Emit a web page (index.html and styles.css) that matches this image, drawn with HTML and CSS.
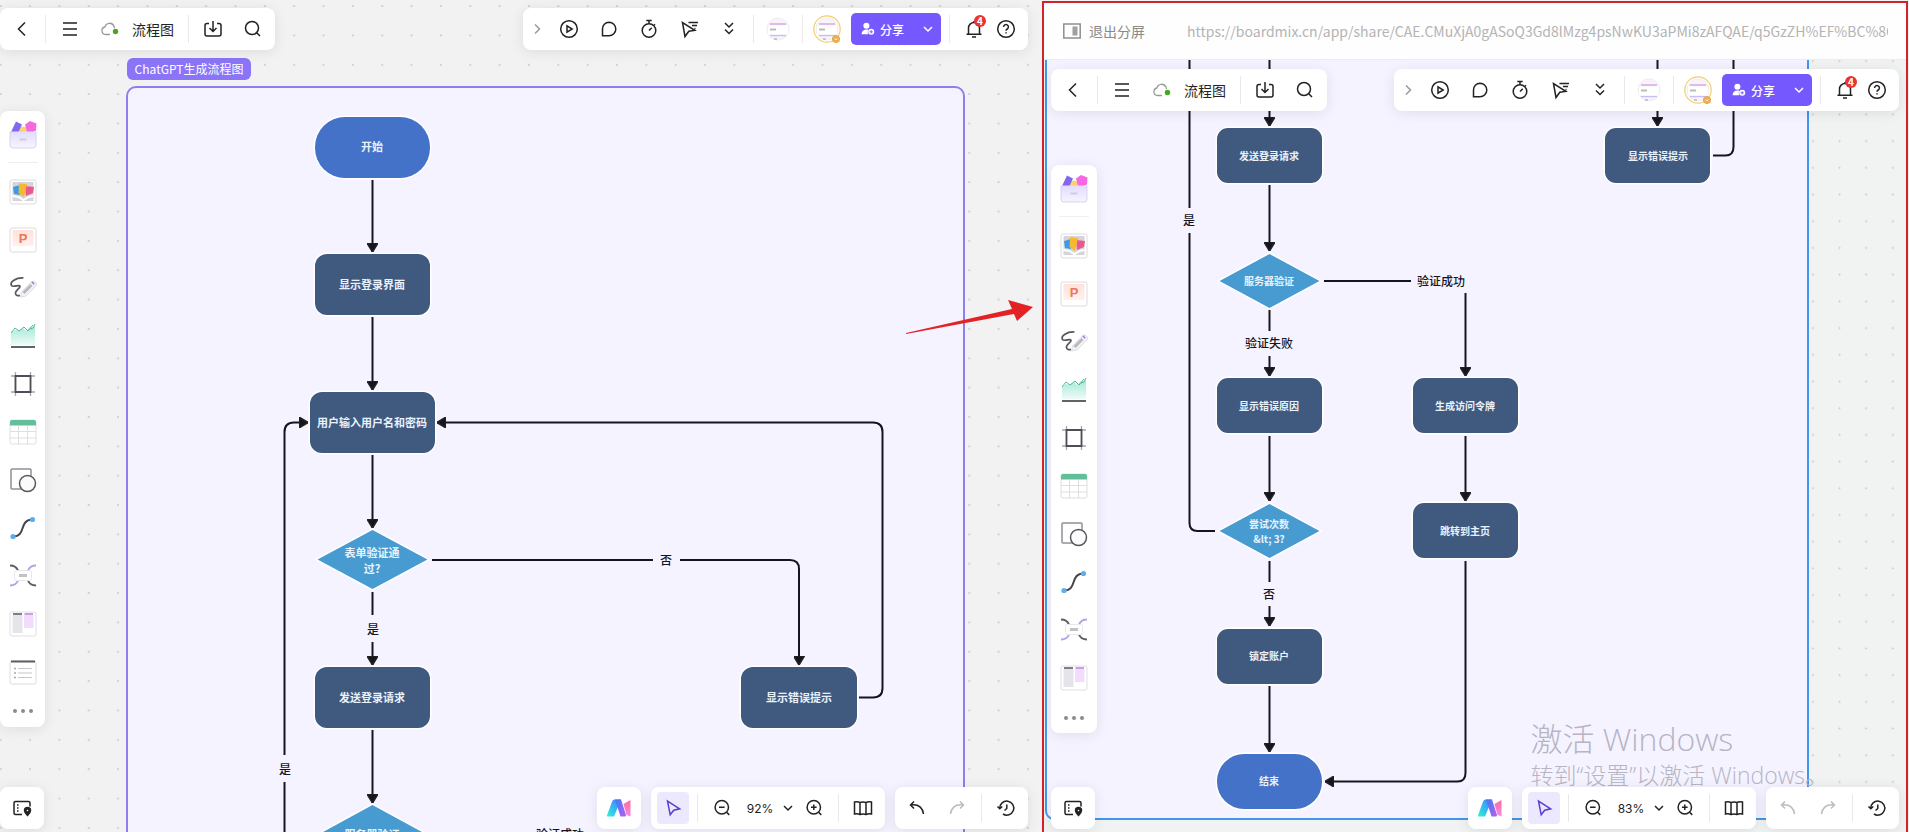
FILE: index.html
```html
<!DOCTYPE html>
<html lang="zh-CN">
<head>
    <meta charset="UTF-8">
    <meta name="viewport" content="width=device-width, initial-scale=1.0">
    <title>流程图</title>
    <link rel="stylesheet" href="styles.css">
</head>
<body>
    <!-- icon sprite -->
    <svg class="sprite" width="0" height="0" aria-hidden="true">
        <defs>
            <linearGradient id="aiLeft" x1="0" y1="1" x2="1" y2="0">
                <stop offset="0" stop-color="#2ff5d0"/><stop offset=".5" stop-color="#35b5f5"/><stop offset="1" stop-color="#3f7cf0"/>
            </linearGradient>
            <linearGradient id="aiMid" x1="0" y1="0" x2="1" y2="1">
                <stop offset="0" stop-color="#3a7df0"/><stop offset="1" stop-color="#b85cf8"/>
            </linearGradient>
            <linearGradient id="aiRight" x1="0" y1="0" x2="0" y2="1">
                <stop offset="0" stop-color="#ff6a9e"/><stop offset="1" stop-color="#f58ae0"/>
            </linearGradient>
            <linearGradient id="boxFill" x1="0" y1="0" x2="0" y2="1">
                <stop offset="0" stop-color="#e2dcfd"/><stop offset="1" stop-color="#f7f5ff"/>
            </linearGradient>
            <linearGradient id="chartFill" x1="0" y1="0" x2="0" y2="1">
                <stop offset="0" stop-color="#9fe8d5"/><stop offset="1" stop-color="#effbf8"/>
            </linearGradient>
            <linearGradient id="pptFill" x1="0" y1="0" x2="0" y2="1">
                <stop offset="0" stop-color="#ffe2da"/><stop offset="1" stop-color="#fff1ed"/>
            </linearGradient>
            <marker id="arrow" viewBox="0 0 9 11" refX="9" refY="5.5" markerWidth="9" markerHeight="11" markerUnits="userSpaceOnUse" orient="auto">
                <path d="M0 0 9 5.5 0 11z" fill="#15151f"/>
            </marker>
        </defs>
        <symbol id="i-back" viewBox="0 0 20 20"><path d="M12 3.500 5.500 10l6.500 6.500"/></symbol>
        <symbol id="i-menu" viewBox="0 0 20 20"><path d="M3 4h14M3 10h14M3 16h14"/></symbol>
        <symbol id="i-cloud" viewBox="0 0 20 20">
            <path d="M10 15.500H5.500a3.800 3.800 0 0 1-.6-7.500A4.800 4.800 0 0 1 14 7.200q.4 1 .4 2" stroke="#9a9a9a" stroke-width="1.300"/>
            <circle cx="15.500" cy="12.500" r="2.700" fill="#45a81f" stroke="none"/>
        </symbol>
        <symbol id="i-download" viewBox="0 0 20 20"><path d="M6 4.500H4a2 2 0 0 0-2 2V15a2 2 0 0 0 2 2h12a2 2 0 0 0 2-2V6.500a2 2 0 0 0-2-2h-2M10 2v10M6.500 9l3.500 3.500L13.500 9"/></symbol>
        <symbol id="i-search" viewBox="0 0 20 20"><circle cx="9" cy="9" r="6.500"/><path d="m13.700 13.700 3.300 3.300"/></symbol>
        <symbol id="i-next" viewBox="0 0 20 20"><path d="m9 5.500 4.500 4.500L9 14.500" stroke="#9a9a9a"/></symbol>
        <symbol id="i-play" viewBox="0 0 20 20"><circle cx="10" cy="10" r="8.300"/><path d="M8 6.800v6.400l5.200-3.200z"/></symbol>
        <symbol id="i-comment" viewBox="0 0 20 20"><path d="M10 3.200a6.800 6.800 0 1 1 0 13.600H3.500V10A6.600 6.600 0 0 1 10 3.200z"/></symbol>
        <symbol id="i-timer" viewBox="0 0 20 20"><circle cx="10" cy="11.500" r="6.800"/><path d="M10 4.500v-3M7.300 1.500h5.400M10 11.500l2.800-2.800M15 6.300l1-1"/></symbol>
        <symbol id="i-pointer" viewBox="0 0 20 20"><path d="m3.500 3.500 2.500 14 3.800-5.300 6-.8zM9.500 3.500h9.500M13 6.500h5M15.500 9.500h1"/></symbol>
        <symbol id="i-more" viewBox="0 0 20 20"><path d="m6 4 4 4 4-4M6 10.500l4 4 4-4"/></symbol>
        <symbol id="i-user" viewBox="0 0 20 20">
            <g fill="#fff" stroke="none"><circle cx="8" cy="6" r="3.800"/><path d="M2 16.500c0-4 2.500-6 6-6 1 0 2 .2 2.700.6a4.500 4.500 0 0 0-.4 5.400z"/><circle cx="14" cy="13.500" r="3.800"/></g>
            <path d="M14 11.500v4M12 13.500h4" stroke="#7559ff" stroke-width="1.200"/>
        </symbol>
        <symbol id="i-down" viewBox="0 0 12 12"><path d="m2 4 4 4 4-4"/></symbol>
        <symbol id="i-bell" viewBox="0 0 20 20"><path d="M2.500 15.200h15M4.500 15V9a5.500 5.500 0 0 1 11 0v6M10 3.500V2M8 18h4"/></symbol>
        <symbol id="i-help" viewBox="0 0 20 20"><circle cx="10" cy="10" r="8.300"/><path d="M7.600 8a2.400 2.400 0 1 1 3.700 2q-1.300.8-1.300 1.800M10 13.300v1.200"/></symbol>
        <symbol id="i-avatar" viewBox="0 0 28 28">
            <circle cx="14" cy="14" r="11" fill="#f7f5fa" stroke="#efecf2" stroke-width="1"/>
            <path d="M6 9h16" stroke="#d9a6ea" stroke-width="1.500"/><path d="M6 20.500h16" stroke="#c9bdf5" stroke-width="1.500"/>
            <path d="M4 10.500h20v9H4z" fill="#fff" stroke="none"/>
            <path d="M6 14.500h6" stroke="#b8bcb8" stroke-width="2"/><path d="M10 24h3" stroke="#999" stroke-width="1"/>
        </symbol>
        <symbol id="i-ring" viewBox="0 0 28 28">
            <circle cx="14" cy="14" r="13.200" stroke="#f0d070" stroke-width="1.200"/>
            <circle cx="23" cy="24" r="3.600" fill="#f0b048" stroke="#e0a860" stroke-width="1"/>
            <path d="m21.500 23.500 1.500 1.500 1.500-1.500" stroke="#fff3cf" stroke-width="1"/>
        </symbol>
        <symbol id="i-minimap" viewBox="0 0 20 20">
            <path d="M10 16.500H3.500A1.500 1.500 0 0 1 2 15V5a1.500 1.500 0 0 1 1.500-1.500h13A1.500 1.500 0 0 1 18 5v3.500M5 7h1.500M5 10h1.500M5 13h1.500"/>
            <path d="M15.500 9.500a3 3 0 0 1 3 3c0 2-3 5-3 5s-3-3-3-5a3 3 0 0 1 3-3z" fill="#222"/><circle cx="15.500" cy="12.500" r=".8" fill="#fff" stroke="none"/>
        </symbol>
        <symbol id="i-ai" viewBox="0 0 26 20">
            <g stroke="none">
                <path d="M8.500 1.500H15L8 18.500H2a1 1 0 0 1-1-1.300L6.300 3q.6-1.500 2.200-1.500z" fill="url(#aiLeft)"/>
                <path d="M9 1.500h6L20 17q.2 1.500-1.300 1.500h-4.200z" fill="url(#aiMid)"/>
                <path d="M24.500 2v16.500l-4-1.500L17.500 6z" fill="url(#aiRight)"/>
            </g>
        </symbol>
        <symbol id="i-select" viewBox="0 0 20 20"><path d="m4.500 3 2.700 13.800 3.500-4.600 6-1.400z" stroke="#5b3fd0"/></symbol>
        <symbol id="i-zoomout" viewBox="0 0 20 20"><circle cx="9.800" cy="9.300" r="6.700"/><path d="m14.600 14.200 2.700 2.700M7 9.300h5.600"/></symbol>
        <symbol id="i-zoomin" viewBox="0 0 20 20"><circle cx="9.800" cy="9.300" r="6.700"/><path d="m14.600 14.200 2.700 2.700M7 9.300h5.600M9.800 6.500v5.600"/></symbol>
        <symbol id="i-map" viewBox="0 0 20 20"><path d="M1.500 4v12q3-.8 5.500.5 3-1 6 0 2.500-1.300 5.500-.5V4q-3-.8-5.500.5-3-1-6 0Q4.500 3.200 1.500 4zM7 4.500v12M13 4.500v12"/></symbol>
        <symbol id="i-undo" viewBox="0 0 20 20"><path d="M7 3.500 3.500 7 7 10.500M3.500 7Q15 5.500 16.500 16"/></symbol>
        <symbol id="i-redo" viewBox="0 0 20 20"><path d="M13 3.500 16.500 7 13 10.500M16.500 7Q5 5.500 3.500 16"/></symbol>
        <symbol id="i-history" viewBox="0 0 20 20"><path d="M3.800 10.500A7 7 0 1 1 7 16M1.500 8.500l2.300 2.300 2.400-2.300M10.800 6.500v4l-2.300 2"/></symbol>
        <symbol id="i-exit" viewBox="0 0 20 20"><path d="M1.800 3h16.400v14H1.800z" stroke="#8f8f8f"/><path d="M10.500 5.500h5v9h-5z" fill="#a0a0a0" stroke="none"/></symbol>

        <symbol id="t-templates" viewBox="0 0 30 30">
            <circle cx="15" cy="12.500" r="6" fill="#fbd071" stroke="none"/>
            <path d="M3 12 8 1.500l6 3L10.500 12z" fill="#8168ee" stroke="none"/><path d="m17 4.500 5-3.500 6.500 2.500-.5 7-3 1.500h-6z" fill="#f569e0" stroke="none"/>
            <path d="M2 11.500h26V25a3 3 0 0 1-3 3H5a3 3 0 0 1-3-3z" fill="url(#boxFill)" stroke="none"/>
            <path d="M2 11.500V25a3 3 0 0 0 3 3h20a3 3 0 0 0 3-3V11.500" stroke="#d9d5e8" stroke-width="1"/>
            <path d="M11.500 19.500h7" stroke="#cfcbe6" stroke-width="2"/>
        </symbol>
        <symbol id="t-media" viewBox="0 0 30 30">
            <rect x="2" y="3" width="26" height="24" rx="2" fill="#fff" stroke="#dcdce0" stroke-width="1"/>
            <path d="M4.500 5h21v19h-21z" fill="#d5d5d9" stroke="none"/><path d="m4.500 19 6 1 5 3 5-3 5-1" stroke="#fff" stroke-width="2"/>
            <path d="m5 10 7-2v10l-6-1z" fill="#3c9be5" stroke="none"/><path d="m17 9 9 1-1 6-7 3z" fill="#ea588e" stroke="none"/><path d="m11 6.500 8 .5-3 13-5.500-4z" fill="#f5b82e" stroke="none"/>
        </symbol>
        <symbol id="t-slides" viewBox="0 0 30 30">
            <rect x="2" y="3" width="26" height="24" rx="2" fill="#fff" stroke="#dcdce0" stroke-width="1"/>
            <path d="M4.500 5h21v16h-21z" fill="url(#pptFill)" stroke="none"/>
        </symbol>
        <symbol id="t-pen" viewBox="0 0 30 30">
            <path d="M15.500 5C8 4.500 1.500 9 3.500 12.500c1.500 2.300 8.500-1.500 8.500 1 0 2-5 4-4.500 7 .2 2 2.500 2.500 4.500 2" stroke="#55555c" stroke-width="1.700"/>
            <path d="m12.500 24 1-5L24 8.500q2.500-1 4 1t0 3.500L18 23z" fill="#f3f2f5" stroke="#dddde2" stroke-width="1"/>
            <path d="m15.500 20 8-8" stroke="#b9b9c0" stroke-width="3"/><path d="m24.500 10.500 1-1" stroke="#a86cf0" stroke-width="3.500"/>
        </symbol>
        <symbol id="t-chart" viewBox="0 0 30 30">
            <path d="m3 12 4-3 4 1 4-3 3 3 4-4 3 1 2-3v20H3z" fill="url(#chartFill)" stroke="none"/>
            <path d="m3 12 4-5 4 3 5-4 4 4 5-6M22 8l3-1 2-4" stroke="#55b79b" stroke-width="1"/><path d="M3 26h24" stroke="#5f6469" stroke-width="2"/>
        </symbol>
        <symbol id="t-frame" viewBox="0 0 30 30">
            <path d="M3 7h24M3 23h24M7.500 3v24M22.500 3v24" stroke="#a6a6ac" stroke-width="1.300"/><path d="M7.500 7h15v16h-15z" fill="#fff" stroke="#4e4e58" stroke-width="1.800"/>
        </symbol>
        <symbol id="t-table" viewBox="0 0 30 30">
            <rect x="2" y="3" width="26" height="24" rx="2" fill="#fff" stroke="#dfdfe3" stroke-width="1"/>
            <path d="M2 8.500V5a2 2 0 0 1 2-2h22a2 2 0 0 1 2 2v3.500z" fill="#63bf9a" stroke="none"/><path d="M2 14.500h26M2 21h26M10.500 9v18M19.500 9v18" stroke="#dfdfe3" stroke-width="1"/>
        </symbol>
        <symbol id="t-shape" viewBox="0 0 30 30">
            <rect x="3" y="4" width="20" height="20" rx="1" stroke="#909096"/><circle cx="19.500" cy="18.500" r="8" fill="#fbfbfc" stroke="#55555c"/>
        </symbol>
        <symbol id="t-line" viewBox="0 0 30 30">
            <path d="M5 23.500c14 0 5-17 20-17" stroke="#45454d" stroke-width="2"/><circle cx="5" cy="23.500" r="2.600" fill="#5facea" stroke="none"/><circle cx="24.500" cy="6.500" r="2.600" fill="#5facea" stroke="none"/>
        </symbol>
        <symbol id="t-mind" viewBox="0 0 30 30">
            <path d="M2 4.500q6 0 8 5M28 24.500q-6 0-8-5" stroke="#5c5c62" stroke-width="2"/><path d="M28 4.500q-6 0-8 5M2 24.500q6 0 8-5" stroke="#b8a0ea" stroke-width="2"/>
            <rect x="6.500" y="9.500" width="17" height="10" rx="2" fill="#fff" stroke="#e8e8ec" stroke-width="1"/><path d="M11 14.500h8" stroke="#c2c2c6" stroke-width="3"/>
        </symbol>
        <symbol id="t-kanban" viewBox="0 0 30 30">
            <rect x="2" y="3" width="26" height="24" rx="2" fill="#fff" stroke="#dfdfe3" stroke-width="1"/>
            <path d="M4.500 6h10v18h-10z" fill="#e4e4ea" stroke="none"/><path d="M16 6h9.500v13H16z" fill="#f1dcfb" stroke="none"/>
            <path d="M5 5h9" stroke="#55555f"/><path d="M16.500 5H25" stroke="#c278e0"/>
        </symbol>
        <symbol id="t-list" viewBox="0 0 30 30">
            <rect x="2" y="4" width="26" height="23" rx="2" fill="#fff" stroke="#dcdce0" stroke-width="1"/><path d="M3 4.500h24" stroke="#5c5c62" stroke-width="2"/>
            <path d="M10 11.500h14M10 16h14M10 20.500h14" stroke="#c6c6ca" stroke-width="1"/><path d="M6.500 11.500h1M6.500 16h1M6.500 20.500h1" stroke="#55555c" stroke-width="1.500"/>
        </symbol>
        <symbol id="t-more" viewBox="0 0 30 30"><g fill="#8c8c90" stroke="none"><circle cx="7" cy="15" r="2"/><circle cx="15" cy="15" r="2"/><circle cx="23" cy="15" r="2"/></g></symbol>
    </svg>

    <!-- toolbars shared by both boards -->
    <template id="toolbars">
        <div class="row row-top">
            <div class="bar bar-file">
                <button class="btn btn-back" aria-label="返回"><svg class="icon"><use href="#i-back"/></svg></button>
                <span class="divider"></span>
                <button class="btn btn-wide" aria-label="菜单"><svg class="icon"><use href="#i-menu"/></svg></button>
                <button class="btn" aria-label="已保存"><svg class="icon"><use href="#i-cloud"/></svg></button>
                <span class="title">流程图</span>
                <span class="divider"></span>
                <button class="btn btn-wide" aria-label="导出"><svg class="icon"><use href="#i-download"/></svg></button>
                <button class="btn" aria-label="搜索"><svg class="icon"><use href="#i-search"/></svg></button>
            </div>
            <div class="bar bar-share">
                <button class="btn btn-fold" aria-label="收起"><svg class="icon"><use href="#i-next"/></svg></button>
                <button class="btn btn-mid" aria-label="演示"><svg class="icon"><use href="#i-play"/></svg></button>
                <button class="btn btn-mid" aria-label="评论"><svg class="icon"><use href="#i-comment"/></svg></button>
                <button class="btn btn-mid" aria-label="计时器"><svg class="icon"><use href="#i-timer"/></svg></button>
                <button class="btn btn-mid" aria-label="光标"><svg class="icon"><use href="#i-pointer"/></svg></button>
                <button class="btn btn-mid" aria-label="更多"><svg class="icon"><use href="#i-more"/></svg></button>
                <span class="divider divider-first"></span>
                <button class="btn btn-wide" aria-label="协作者"><svg class="avatar"><use href="#i-avatar"/></svg></button>
                <span class="divider"></span>
                <button class="btn btn-wide" aria-label="我的头像"><svg class="avatar"><use href="#i-avatar"/><use href="#i-ring"/></svg></button>
                <button class="share"><svg class="icon-share"><use href="#i-user"/></svg><span>分享</span><svg class="chevron"><use href="#i-down"/></svg></button>
                <span class="divider spaced"></span>
                <button class="btn bell" aria-label="通知"><svg class="icon"><use href="#i-bell"/></svg><span class="badge">4</span></button>
                <button class="btn" aria-label="帮助"><svg class="icon"><use href="#i-help"/></svg></button>
            </div>
        </div>
        <nav class="tools" aria-label="工具">
            <button class="tool" aria-label="模板"><svg><use href="#t-templates"/></svg></button>
            <span class="rule"></span>
            <button class="tool" aria-label="素材"><svg><use href="#t-media"/></svg></button>
            <button class="tool" aria-label="幻灯片"><svg><use href="#t-slides"/><text class="slides-mark" x="15" y="18">P</text></svg></button>
            <button class="tool" aria-label="画笔"><svg><use href="#t-pen"/></svg></button>
            <button class="tool" aria-label="图表"><svg><use href="#t-chart"/></svg></button>
            <button class="tool" aria-label="画框"><svg><use href="#t-frame"/></svg></button>
            <button class="tool" aria-label="表格"><svg><use href="#t-table"/></svg></button>
            <button class="tool" aria-label="形状"><svg><use href="#t-shape"/></svg></button>
            <button class="tool" aria-label="连线"><svg><use href="#t-line"/></svg></button>
            <button class="tool" aria-label="思维导图"><svg><use href="#t-mind"/></svg></button>
            <button class="tool" aria-label="看板"><svg><use href="#t-kanban"/></svg></button>
            <button class="tool tool-list" aria-label="列表"><svg><use href="#t-list"/></svg></button>
            <button class="tool tool-more" aria-label="更多工具"><svg><use href="#t-more"/></svg></button>
        </nav>
        <div class="row row-bottom">
            <div class="bar"><button class="btn btn-square" aria-label="导航"><svg class="icon"><use href="#i-minimap"/></svg></button></div>
            <div class="group">
                <div class="bar"><button class="btn btn-square" aria-label="AI 助手"><svg class="icon-ai"><use href="#i-ai"/></svg></button></div>
                <div class="bar bar-padded">
                    <button class="btn active" aria-label="选择"><svg class="icon"><use href="#i-select"/></svg></button>
                    <span class="divider spaced"></span>
                    <button class="btn" aria-label="缩小"><svg class="icon"><use href="#i-zoomout"/></svg></button>
                    <label class="zoom"><select aria-label="缩放"><option></option></select><svg class="chevron"><use href="#i-down"/></svg></label>
                    <button class="btn" aria-label="放大"><svg class="icon"><use href="#i-zoomin"/></svg></button>
                    <span class="divider spaced"></span>
                    <button class="btn" aria-label="小地图"><svg class="icon"><use href="#i-map"/></svg></button>
                </div>
                <div class="bar bar-padded">
                    <button class="btn btn-undo" aria-label="撤销"><svg class="icon"><use href="#i-undo"/></svg></button>
                    <button class="btn btn-redo" aria-label="重做"><svg class="icon"><use href="#i-redo"/></svg></button>
                    <span class="divider spaced"></span>
                    <button class="btn" aria-label="历史"><svg class="icon"><use href="#i-history"/></svg></button>
                </div>
            </div>
        </div>
    </template>

    <main class="split">
        <section class="pane">
            <div class="board board-main" data-zoom="92%">
                <svg class="canvas chart-main">
                    <defs><pattern id="dots92" x="-14" y="-8.600" width="29.350" height="29.350" patternUnits="userSpaceOnUse"><circle cx="14.700" cy="14.700" r="1" fill="#c8c8c8"/></pattern></defs>
                    <rect width="100%" height="100%" fill="url(#dots92)"/>
                    <rect class="frame-label" x="127" y="58" width="124" height="22" rx="6"/>
                    <text class="frame-name" x="189" y="74">ChatGPT生成流程图</text>
                    <rect class="frame" x="127" y="87" width="837" height="900" rx="9"/>

                    <g class="links">
                        <path d="M372.500 180V252"/>
                        <path d="M372.500 317V390"/>
                        <path d="M372.500 455V528"/>
                        <path class="plain" d="M372.500 592V615"/>
                        <path d="M372.500 642V665"/>
                        <path d="M372.500 730V803"/>
                        <path class="plain" d="M284.500 900V782"/>
                        <path d="M284.500 755V432q0-9.500 9.500-9.500H308"/>
                        <path class="plain" d="M432 560H653"/>
                        <path d="M680 560H790q9 0 9 9V665"/>
                        <path d="M859 697.500H873q9.500 0 9.500-9.500V432q0-9.500-9.500-9.500H437"/>
                    </g>
                    <g class="nodes">
                        <rect class="terminal" x="315" y="117" width="115" height="61" rx="30"/>
                        <rect class="step" x="315" y="254" width="115" height="61" rx="12"/>
                        <rect class="step" x="310" y="392" width="125" height="61" rx="12"/>
                        <path class="decision" d="M372.500 530 427.500 559.500 372.500 589 317.500 559.500z"/>
                        <rect class="step" x="315" y="667" width="115" height="61" rx="12"/>
                        <rect class="step" x="741" y="667" width="116" height="61" rx="12"/>
                        <path class="decision" d="M372.500 805 427.500 835 372.500 865 317.500 835z"/>
                    </g>
                    <g class="node-text">
                        <text x="372" y="151">开始</text>
                        <text x="372" y="289">显示登录界面</text>
                        <text x="372" y="427">用户输入用户名和密码</text>
                        <text x="372" y="557">表单验证通</text>
                        <text x="372" y="573">过?</text>
                        <text x="372" y="702">发送登录请求</text>
                        <text x="799" y="702">显示错误提示</text>
                        <text x="372" y="839">服务器验证</text>
                    </g>
                    <g class="link-text">
                        <text x="373" y="634">是</text>
                        <text x="285" y="774">是</text>
                        <text x="666" y="565">否</text>
                        <text x="560" y="839">验证成功</text>
                    </g>
                </svg>
            </div>
        </section>

        <section class="pane pane-split">
            <header class="address">
                <button class="exit"><svg class="icon"><use href="#i-exit"/></svg>退出分屏</button>
                <input class="url" type="text" aria-label="网址" readonly value="https://boardmix.cn/app/share/CAE.CMuXjA0gASoQ3Gd8lMzg4psNwKU3aPMi8zAFQAE/q5GzZH%EF%BC%8C%E7%82%B9%E5%87%BB">
            </header>
            <div class="board board-side" data-zoom="83%">
                <svg class="canvas chart-side">
                    <defs><pattern id="dots83" x="755.600" y="-12.300" width="26.650" height="26.700" patternUnits="userSpaceOnUse"><circle cx="13.300" cy="13.300" r="1" fill="#c8c8c8"/></pattern></defs>
                    <rect width="100%" height="100%" fill="url(#dots83)"/>
                    <rect class="frame frame-active" x="2" y="-40" width="762" height="799" rx="8"/>

                    <g class="links">
                        <path d="M225.500 0V66"/>
                        <path d="M225.500 125V191"/>
                        <path class="plain" d="M225.500 250V271"/>
                        <path d="M225.500 296V316"/>
                        <path d="M225.500 376V441"/>
                        <path class="plain" d="M225.500 501V522"/>
                        <path d="M225.500 546V566"/>
                        <path d="M225.500 626V692"/>
                        <path class="plain" d="M145.500 0V148"/>
                        <path class="plain" d="M145.500 173V463q0 8 8 8H171"/>
                        <path class="plain" d="M280 221H367"/>
                        <path d="M421.500 233V316"/>
                        <path d="M421.500 376V441"/>
                        <path d="M421.500 501V713q0 8.500-8 8.500H281"/>
                        <path d="M613.500 0V66"/>
                        <path class="plain" d="M689.500 0V87q0 8.500-8 8.500H669"/>
                    </g>
                    <g class="nodes">
                        <rect class="step" x="173" y="68" width="105" height="55" rx="11"/>
                        <path class="decision" d="M225.500 194 275.500 221 225.500 248 175.500 221z"/>
                        <rect class="step" x="173" y="318" width="105" height="55" rx="11"/>
                        <path class="decision" d="M225.500 444 275.500 471 225.500 498 175.500 471z"/>
                        <rect class="step" x="173" y="569" width="105" height="55" rx="11"/>
                        <rect class="terminal" x="173" y="694" width="105" height="55" rx="27"/>
                        <rect class="step" x="369" y="318" width="105" height="55" rx="11"/>
                        <rect class="step" x="369" y="443" width="105" height="55" rx="11"/>
                        <rect class="step" x="561" y="68" width="105" height="55" rx="11"/>
                    </g>
                    <g class="node-text">
                        <text x="225" y="100">发送登录请求</text>
                        <text x="225" y="225">服务器验证</text>
                        <text x="225" y="350">显示错误原因</text>
                        <text x="225" y="468">尝试次数</text>
                        <text x="225" y="483">&amp;lt; 3?</text>
                        <text x="225" y="600">锁定账户</text>
                        <text x="225" y="725">结束</text>
                        <text x="421" y="350">生成访问令牌</text>
                        <text x="421" y="475">跳转到主页</text>
                        <text x="614" y="100">显示错误提示</text>
                    </g>
                    <g class="link-text">
                        <text x="145" y="165">是</text>
                        <text x="397" y="226">验证成功</text>
                        <text x="225" y="288">验证失败</text>
                        <text x="225" y="539">否</text>
                    </g>
                </svg>
                <div class="watermark">
                    <p class="watermark-title">激活 Windows</p>
                    <p class="watermark-text">转到“设置”以激活 Windows。</p>
                </div>
            </div>
        </section>

        <svg class="callout" viewBox="0 0 128 38" aria-hidden="true"><path d="M0 37 106 13 102 4 127 11 111 25 108 18 0 38z" fill="#e32226"/></svg>
    </main>

    <script>
        document.querySelectorAll('.board').forEach(board => {
            const overlay = document.createElement('div');
            overlay.className = 'overlay';
            overlay.appendChild(document.getElementById('toolbars').content.cloneNode(true));
            overlay.querySelector('option').textContent = board.dataset.zoom;
            board.appendChild(overlay);
        });
        // nothing has been edited in the side board yet
        document.querySelector('.board-side .btn-undo').disabled = true;
        document.querySelectorAll('.btn-redo').forEach(btn => btn.disabled = true);
    </script>
</body>
</html>
```
FILE: styles.css
```css
* {
    box-sizing: border-box;
}
body {
    margin: 0;
    height: 100vh;
    overflow: hidden;
    background-color: #f2f2f2;
    color: #222;
    font-family: "Noto Sans CJK SC", "Noto Sans", sans-serif;
    font-size: 14px;
}
button, input, select {
    font: inherit;
    color: inherit;
    border: none;
    background: none;
    padding: 0;
    margin: 0;
}
button {
    cursor: pointer;
}
svg {
    flex: none;
    fill: none;
    stroke: #222;
    stroke-width: 1.5;
}
.sprite {
    position: absolute;
}

/* panes */
.split {
    position: relative;
    display: grid;
    grid-template-columns: 1042fr 867fr;
    height: 100vh;
}
.pane {
    display: flex;
    flex-direction: column;
    min-width: 0;
}
.pane-split {
    margin: 1px 1px 0 0;
    border: 2px solid #d2222c;
    border-bottom: none;
}
.board {
    position: relative;
    flex: 1;
    overflow: hidden;
}
.board-side {
    background-color: #f1f2f2;
}
.canvas {
    position: absolute;
    inset: 0;
    width: 100%;
    height: 100%;
    stroke: none;
}
.overlay {
    position: absolute;
    inset: 0;
    display: flex;
    flex-direction: column;
    justify-content: space-between;
    align-items: flex-start;
    padding: 8px 14px 3px 0;
}
.board-side .overlay {
    padding: 9px 7px 3px 7px;
}

/* address bar */
.address {
    display: flex;
    align-items: center;
    height: 57px;
    padding: 0 18px;
    background-color: #fefefe;
    border-bottom: 1px solid #ececf0;
}
.exit {
    display: flex;
    align-items: center;
    gap: 7px;
    margin-right: 42px;
    color: #8a8a8a;
}
.url {
    flex: 1;
    min-width: 0;
    color: #b4b4b4;
}

/* toolbars */
.row {
    display: flex;
    justify-content: space-between;
    width: 100%;
}
.group {
    display: flex;
    gap: 10px;
}
.bar {
    display: flex;
    align-items: center;
    height: 42px;
    background-color: #fff;
    border-radius: 8px;
    box-shadow: 0 2px 14px rgba(0, 0, 0, 0.09);
}
.bar-file, .bar-share {
    padding-right: 6px;
}
.bar-padded {
    padding: 0 6px;
}
.btn {
    display: flex;
    align-items: center;
    justify-content: center;
    width: 32px;
    height: 32px;
    border-radius: 4px;
}
.btn-back { width: 46px; }
.btn-wide { width: 48px; }
.btn-mid { width: 40px; }
.btn-fold { width: 26px; }
.btn-square { width: 44px; }
.btn-undo { margin-right: 8px; }
.btn:disabled { opacity: 0.3; }
.btn.active { background-color: #ece8fe; }
.board-main .btn-back { width: 45px; }
.icon {
    width: 20px;
    height: 20px;
}
.icon-share {
    width: 16px;
    height: 16px;
}
.icon-ai {
    width: 26px;
    height: 20px;
}
.avatar {
    width: 28px;
    height: 28px;
}
.chevron {
    width: 12px;
    height: 12px;
}
.divider {
    width: 1px;
    height: 28px;
    background-color: #e9e9ec;
}
.divider-first { margin-left: 4px; }
.spaced { margin: 0 8px; }
.title {
    padding: 0 14px 0 6px;
}
.share {
    display: flex;
    align-items: center;
    width: 90px;
    height: 32px;
    padding: 0 7px 0 9px;
    border-radius: 5px;
    background-color: #7559ff;
    color: #fff;
    font-size: 12px;
    font-weight: 500;
}
.share span {
    flex: 1;
    margin-left: 4px;
    text-align: left;
}
.share .chevron {
    stroke: #fff;
}
.bell {
    position: relative;
}
.badge {
    position: absolute;
    top: 2px;
    right: 4px;
    width: 12px;
    height: 12px;
    border-radius: 6px;
    background-color: #e8352e;
    color: #fff;
    font-size: 10px;
    font-weight: 700;
    line-height: 12px;
    text-align: center;
}
.zoom {
    display: flex;
    align-items: center;
    width: 60px;
}
.zoom select {
    width: 44px;
    appearance: none;
    text-align: center;
    text-align-last: center;
    font-family: Inter, sans-serif;
    font-size: 12px;
}

/* side tools */
.tools {
    display: flex;
    flex-direction: column;
    align-items: center;
    width: 45px;
    background-color: #fff;
    border-radius: 8px;
    box-shadow: 0 2px 14px rgba(0, 0, 0, 0.09);
}
.tool {
    width: 44px;
    height: 48px;
}
.tool svg {
    display: block;
    width: 30px;
    height: 30px;
    margin: 0 auto;
}
.tool-more { height: 31px; }
.rule {
    width: 30px;
    height: 1px;
    margin: 3px 0 5px;
    background-color: #efeff2;
}
.slides-mark {
    fill: #f0735a;
    stroke: none;
    font-family: "Liberation Sans", sans-serif;
    font-size: 13px;
    font-weight: 700;
    text-anchor: middle;
}
.board-side .tools {
    width: 46px;
}
.board-side .tool-list {
    display: none;
}

/* flowchart */
.canvas text {
    text-anchor: middle;
}
.frame {
    fill: #f5f3ff;
    stroke: #907df0;
    stroke-width: 2;
}
.frame-active {
    stroke: #4396ea;
}
.frame-label {
    fill: #8b74f8;
}
.frame-name {
    fill: #fff;
    font-size: 12px;
}
.links path {
    fill: none;
    stroke: #15151f;
    stroke-width: 2;
    marker-end: url(#arrow);
}
.links .plain {
    marker-end: none;
}
.nodes {
    stroke: #fff;
    stroke-width: 3;
    paint-order: stroke;
}
.terminal { fill: #4472c8; }
.step { fill: #40597f; }
.decision { fill: #489bd0; }
.node-text {
    fill: #e8f2fb;
    font-size: 11px;
    font-weight: 700;
}
.chart-side .node-text {
    font-size: 10px;
}
.link-text {
    fill: #15151f;
    font-size: 12px;
    font-weight: 500;
}

/* overlays */
.watermark {
    position: absolute;
    right: 78px;
    bottom: 41px;
    color: #b7b5c4;
    font-family: "Open Sans", "Noto Sans CJK SC", sans-serif;
    font-weight: 300;
    pointer-events: none;
}
.watermark p {
    margin: 0;
    white-space: nowrap;
}
.watermark-title {
    font-size: 32px;
    line-height: 40px;
}
.watermark-text {
    font-size: 23px;
    line-height: 32px;
}
.callout {
    position: absolute;
    left: 906px;
    top: 296px;
    width: 128px;
    height: 38px;
    stroke: none;
}
```
